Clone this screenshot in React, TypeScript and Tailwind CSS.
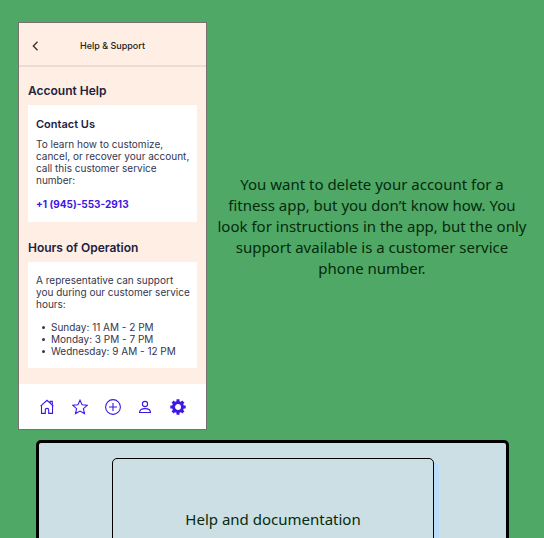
import React from "react";

const hours = ["Sunday: 11 AM - 2 PM", "Monday: 3 PM - 7 PM", "Wednesday: 9 AM - 12 PM"];

const stroke = { fill: "none", stroke: "currentColor", strokeWidth: 1.1 } as const;

function HomeIcon() {
  return (
    <svg viewBox="0 0 16 16" className="size-4" {...stroke}>
      <path d="M2.5 6.3V14.4H6.3V10.6Q6.3 9.4 8 9.4T9.7 10.6V14.4H13.5V6.3M1.6 7.1L8 1.3L14.4 7.1M11.2 3.9V2.4H13.3V6" />
    </svg>
  );
}

function StarIcon() {
  return (
    <svg viewBox="0 0 16 16" className="size-4" {...stroke}>
      <path d="M8 1.2L10.1 5.8L15.2 6.3L11.4 9.7L12.5 14.6L8 12.1L3.5 14.6L4.6 9.7L.8 6.3L5.9 5.8Z" />
    </svg>
  );
}

function AddIcon() {
  return (
    <svg viewBox="0 0 16 16" className="size-4" {...stroke}>
      <circle cx="8" cy="8" r="7.4" />
      <path d="M8 4V12M4 8H12" />
    </svg>
  );
}

function PersonIcon() {
  return (
    <svg viewBox="0 0 16 16" className="size-4" {...stroke}>
      <circle cx="8" cy="5" r="2.6" />
      <path d="M2.5 13.5C2.5 10.9 4.2 9.6 8 9.6S13.5 10.9 13.5 13.5Z" />
    </svg>
  );
}

function GearIcon() {
  return (
    <svg viewBox="0 0 16 16" className="size-4" fill="none" stroke="currentColor">
      <circle cx="8" cy="8" r="4.5" strokeWidth="3" />
      <path
        d="M8 .3V3M8 13V15.7M.3 8H3M13 8H15.7M2.6 2.6L4.4 4.4M11.6 11.6L13.4 13.4M2.6 13.4L4.4 11.6M11.6 4.4L13.4 2.6"
        strokeWidth="3"
      />
    </svg>
  );
}

const tabs = [
  { label: "Home", Icon: HomeIcon },
  { label: "Favorites", Icon: StarIcon },
  { label: "Add", Icon: AddIcon },
  { label: "Profile", Icon: PersonIcon },
  { label: "Settings", Icon: GearIcon },
];

function Phone() {
  return (
    <section className="w-[189px] shrink-0 border border-[#777070] bg-[#ffeee3] font-['Inter',sans-serif] text-[10px] leading-3 text-[#343650]">
      <header className="grid h-11 grid-cols-[32px_1fr_32px] items-center border-b-2 border-[#eaddd5] pt-1">
        <button type="button" aria-label="Back" className="flex justify-center text-[#333]">
          <svg viewBox="0 0 8 12" className="h-[10px] w-2" fill="none" stroke="currentColor" strokeWidth="1.6">
            <path d="M7 1L2 6L7 11" />
          </svg>
        </button>
        <h1 className="text-center text-[9px] font-medium text-[#222]">Help &amp; Support</h1>
      </header>
      <div className="px-[9px] py-4">
        <h2 className="text-xs leading-4 font-semibold text-[#20223f]">Account Help</h2>
        <div className="mt-[6px] bg-white py-3 pr-1 pl-2">
          <h3 className="text-[11px] leading-[14px] font-semibold text-[#20223f]">Contact Us</h3>
          <p className="mt-[7px]">To learn how to customize, cancel, or recover your account, call this customer service number:</p>
          <a href="tel:+19455532913" className="mt-3 block font-bold text-[#3d17e3]">
            +1 (945)-553-2913
          </a>
        </div>
        <h2 className="mt-[18px] text-xs leading-4 font-semibold text-[#20223f]">Hours of Operation</h2>
        <div className="mt-[6px] bg-white pt-3 pr-1 pb-[11px] pl-2">
          <p>A representative can support you during our customer service hours:</p>
          <ul className="mt-[11px] pl-[6px]">
            {hours.map((h) => (
              <li
                key={h}
                className="flex items-center gap-[6px] before:size-[3px] before:rounded-full before:bg-current"
              >
                {h}
              </li>
            ))}
          </ul>
        </div>
      </div>
      <nav className="flex h-[45px] items-center justify-between bg-white px-5 text-[#3d17e3]">
        {tabs.map(({ label, Icon }) => (
          <button key={label} type="button" aria-label={label}>
            <Icon />
          </button>
        ))}
      </nav>
    </section>
  );
}

export default function App() {
  return (
    <main className="h-screen overflow-hidden bg-[#4fa866] font-['Noto_Sans',sans-serif] text-[15px] leading-[21px] text-[#052b0c]">
      <div className="flex items-center pt-[22px] pr-[7px] pl-[18px]">
        <Phone />
        <p className="flex-1 px-[9px] text-center">
          You want to delete your account for a fitness app, but you don’t know how. You look for instructions in the app,
          but the only support available is a customer service phone number.
        </p>
      </div>
      <div className="mt-[10px] mr-[35px] ml-9 rounded-[5px] border-[3px] border-black bg-[#ccdfe4] py-[15px] pr-[72px] pl-[73px]">
        <button
          type="button"
          className="h-[122px] w-full rounded-[5px] border border-black bg-[#ccdfe4] shadow-[5px_5px_#b8defb]"
        >
          Help and documentation
        </button>
      </div>
    </main>
  );
}
